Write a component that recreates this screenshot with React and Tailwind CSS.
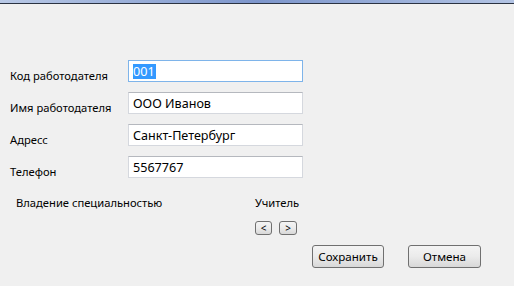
import React from "react";

const fields = [
  { label: "Код работодателя", value: "001", focused: true },
  { label: "Имя работодателя", value: "ООО Иванов" },
  { label: "Адресс", value: "Санкт-Петербург" },
  { label: "Телефон", value: "5567767" },
];

function Field({ label, value, focused }) {
  return (
    <div className="flex h-[32px]">
      <div className="w-[128px] pl-[10px] pt-[8px] leading-[16px]">{label}</div>
      <div
        className={`flex h-[22px] w-[175px] items-center border bg-white pl-[4px] text-[12.6px] leading-[15px] ${
          focused ? "border-[#7eb4ea]" : "border-[#d5d8de] border-t-[#b5b8be]"
        }`}
      >
        {focused ? (
          <span className="bg-[#3399ff] pr-[1px] text-white">{value}</span>
        ) : (
          <span>{value}</span>
        )}
      </div>
    </div>
  );
}

function WinButton({ children, className = "" }) {
  return (
    <button
      className={`flex items-center justify-center rounded-[3px] border border-[#707070] bg-gradient-to-b from-[#f4f4f4] via-[#ebebeb] to-[#d8d8d8] text-black ${className}`}
    >
      {children}
    </button>
  );
}

export default function App() {
  return (
    <div className="h-[286px] w-[514px] overflow-hidden bg-[#f0f0f0] font-['Segoe_UI','Noto_Sans',sans-serif] text-[11.2px] text-black">
      <div className="h-[3px] bg-gradient-to-r from-[#b9c9e6] via-[#7d96cc] to-[#b3c4e4]" />
      <div className="h-px bg-[#2b3342]" />

      <div className="pt-[56px]">
        {fields.map((f) => (
          <Field key={f.label} {...f} />
        ))}

        <div className="mt-[7px] flex leading-[16px]">
          <div className="w-[255px] pl-[16px]">Владение специальностью</div>
          <div>Учитель</div>
        </div>

        <div className="mt-[10px] flex gap-[7px] pl-[255px]">
          <WinButton className="h-[14px] w-[17px] text-[10px] leading-none">&lt;</WinButton>
          <WinButton className="h-[14px] w-[18px] text-[10px] leading-none">&gt;</WinButton>
        </div>

        <div className="mt-[10px] flex gap-[24px] pl-[312px]">
          <WinButton className="h-[23px] w-[72px] text-[11.6px] leading-none">Сохранить</WinButton>
          <WinButton className="h-[23px] w-[73px] text-[11.6px] leading-none">Отмена</WinButton>
        </div>
      </div>
    </div>
  );
}
